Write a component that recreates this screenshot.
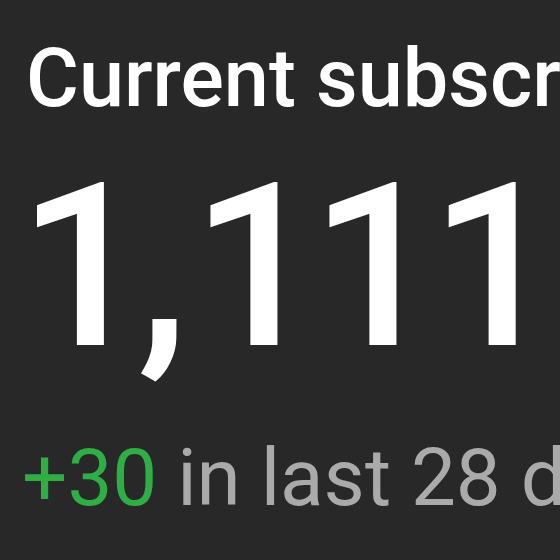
export default function App() {
  return (
    <div
      className="w-[560px] h-[560px] bg-[#282828] overflow-hidden whitespace-nowrap"
      style={{ fontFamily: "Roboto, 'Liberation Sans', sans-serif" }}
    >
      <div className="pt-[37px] pl-[22px]">
        <h2 className="pl-[4px] pt-[1px] text-[81px] font-medium leading-none text-white">Current subscribers</h2>
        <div className="mt-[34px] ml-[-4px] text-[229px] font-medium leading-none tracking-[-11px] text-white">
          1<span className="tracking-[3px]">,</span>111
        </div>
        <p className="mt-[56px] text-[80px] leading-none text-[#aaaaaa]">
          <span className="text-[#2eae45]">+30</span> in last 28 days
        </p>
      </div>
    </div>
  );
}
